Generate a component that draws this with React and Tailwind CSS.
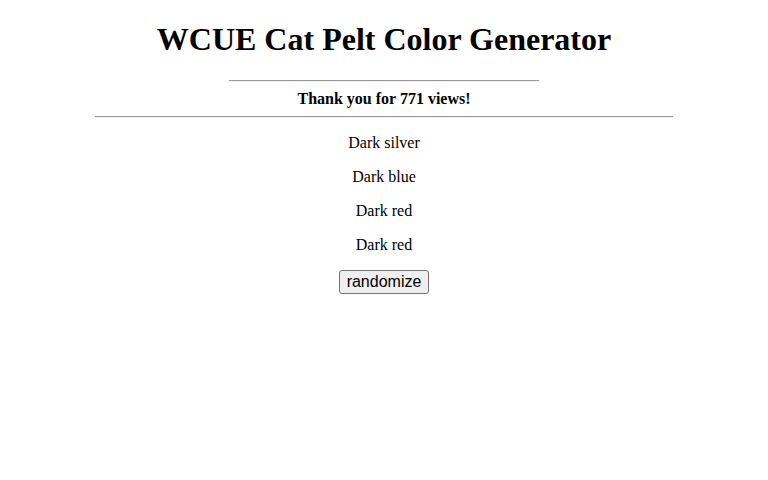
export default function App() {
  const pelts = ["Dark silver", "Dark blue", "Dark red", "Dark red"];
  return (
    <div className="min-h-[480px] bg-white text-center text-black font-['Liberation_Serif',serif] text-base">
      <h1 className="my-[21.44px] text-[32px] font-bold leading-[37px]">
        WCUE Cat Pelt Color Generator
      </h1>
      <div className="mx-auto w-[310px] h-[2px] border-t border-t-[#9a9a9a] border-b border-b-[#eeeeee]" />
      <div className="mt-2 mb-2 font-bold leading-[18px]">Thank you for 771 views!</div>
      <div className="mx-auto w-[578px] h-[2px] border-t border-t-[#9a9a9a] border-b border-b-[#eeeeee]" />
      <div className="mt-4 flex flex-col gap-4">
        {pelts.map((p, i) => (
          <p key={i} className="leading-[18px]">{p}</p>
        ))}
      </div>
      <div className="mt-4 flex justify-center">
        <button className="h-6 w-[90px] rounded-[3px] border border-[#767676] bg-[#efefef] px-[6px] font-['Liberation_Sans',Arial,sans-serif] text-base leading-[18px] text-black">
          randomize
        </button>
      </div>
    </div>
  );
}
